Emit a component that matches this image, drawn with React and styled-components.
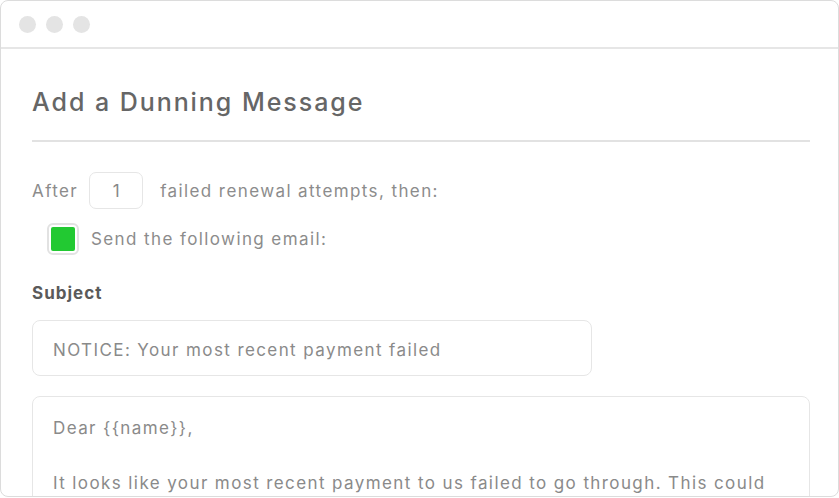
import styled, { createGlobalStyle } from "styled-components";

const Global = createGlobalStyle`
    body {
        margin: 0;
        background: #ffffff;
        font-family: Inter, "Liberation Sans", sans-serif;
    }
`

export default function App(){
    return(
        <>
            <Global />
            <Window>
                <TitleBar>
                    <Dot />
                    <Dot />
                    <Dot />
                </TitleBar>
                <Content>
                    <Heading>Add a Dunning Message</Heading>
                    <Rule />
                    <Row>
                        <Label>After</Label>
                        <NumberBox>1</NumberBox>
                        <Label>failed renewal attempts, then:</Label>
                    </Row>
                    <CheckRow>
                        <Check><CheckFill /></Check>
                        <Label>Send the following email:</Label>
                    </CheckRow>
                    <FieldLabel>Subject</FieldLabel>
                    <SubjectInput>NOTICE: Your most recent payment failed</SubjectInput>
                    <BodyBox>
                        <Line>Dear {"{{name}}"},</Line>
                        <Line>&nbsp;</Line>
                        <Line>It looks like your most recent payment to us failed to go through. This could</Line>
                    </BodyBox>
                </Content>
            </Window>
        </>
    )
}

const Window = styled.div`
    width: 839px;
    height: 497px;
    box-sizing: border-box;
    border: 1.5px solid #dcdcdc;
    border-radius: 8px;
    overflow: hidden;
    background: #fff;
`
const TitleBar = styled.div`
    height: 46px;
    border-bottom: 2px solid #e6e6e6;
    display: flex;
    align-items: center;
    gap: 10px;
    padding-left: 18px;
`
const Dot = styled.div`
    width: 17px;
    height: 17px;
    border-radius: 50%;
    background: #e4e4e4;
`
const Content = styled.div`
    padding: 0 28px 0 31px;
`
const Heading = styled.h1`
    margin: 0;
    padding-top: 38px;
    font-size: 25px;
    font-weight: 500;
    letter-spacing: 1.95px;
    color: #666;
    line-height: 30px;
`
const Rule = styled.div`
    margin-top: 23px;
    height: 2px;
    background: #e2e2e2;
`
const Row = styled.div`
    margin-top: 30px;
    display: flex;
    align-items: center;
`
const Label = styled.span`
    font-size: 17px;
    color: #8c8c8c;
    letter-spacing: 1.4px;
`
const NumberBox = styled.div`
    width: 54px;
    height: 37px;
    margin: 0 17px 0 11px;
    box-sizing: border-box;
    border: 1.5px solid #e6e6e6;
    border-radius: 7px;
    display: flex;
    align-items: center;
    justify-content: center;
    font-size: 17px;
    color: #888;
`
const CheckRow = styled.div`
    margin-top: 14px;
    margin-left: 15px;
    display: flex;
    align-items: center;
    gap: 12px;
`
const Check = styled.div`
    width: 32px;
    height: 32px;
    box-sizing: border-box;
    border: 2px solid #e2e2e2;
    border-radius: 6px;
    padding: 2px;
`
const CheckFill = styled.div`
    width: 100%;
    height: 100%;
    background: #22c932;
    border-radius: 2px;
`
const FieldLabel = styled.div`
    margin-top: 28px;
    font-size: 17px;
    font-weight: 700;
    letter-spacing: 1px;
    color: #5a5a5a;
`
const SubjectInput = styled.div`
    margin-top: 17px;
    width: 560px;
    height: 56px;
    box-sizing: border-box;
    border: 1.5px solid #e6e6e6;
    border-radius: 8px;
    padding: 3px 20px 0;
    display: flex;
    align-items: center;
    font-size: 17px;
    letter-spacing: 1.4px;
    color: #8a8a8a;
`
const BodyBox = styled.div`
    margin-top: 20px;
    height: 140px;
    box-sizing: border-box;
    border: 1.5px solid #e6e6e6;
    border-radius: 8px;
    padding: 18px 20px;
    font-size: 17px;
    letter-spacing: 1.4px;
    color: #8a8a8a;
`
const Line = styled.div`
    line-height: 27.5px;
`
